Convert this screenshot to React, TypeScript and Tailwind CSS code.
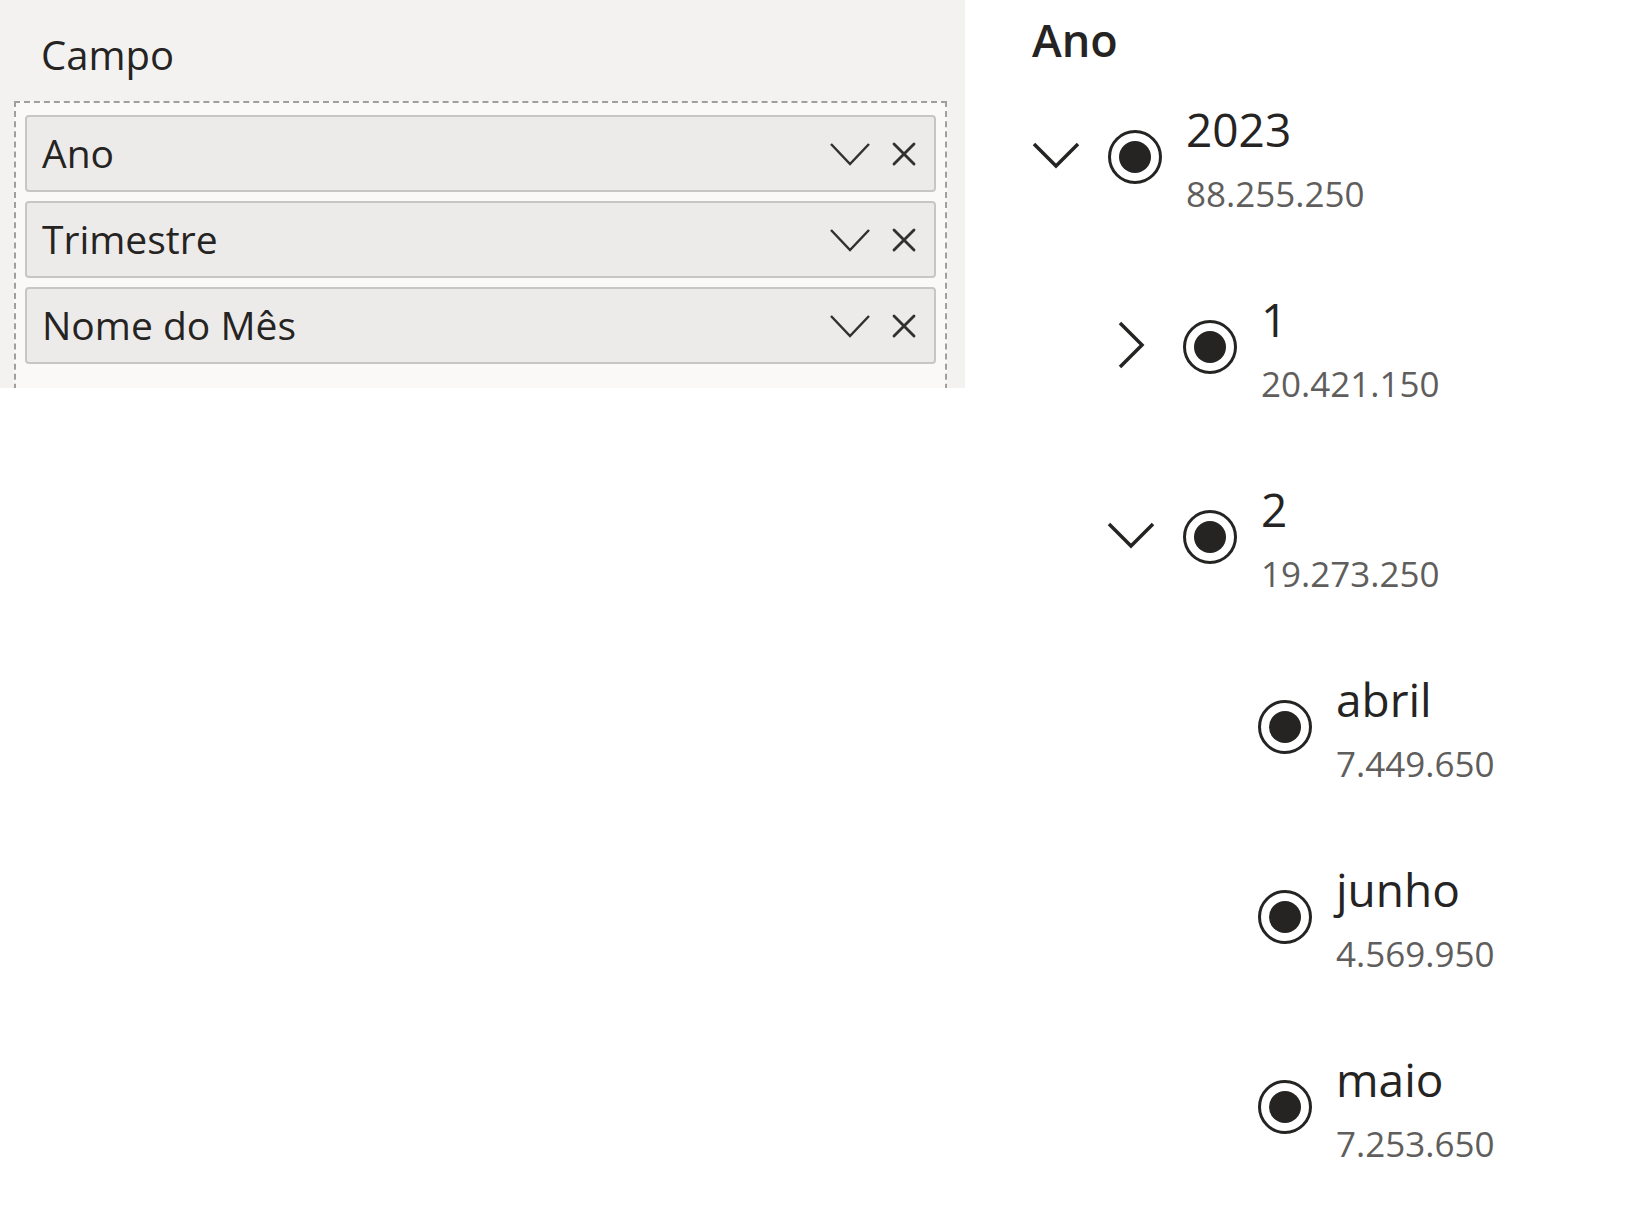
import { X } from 'lucide-react';

type Node = {
  label: string;
  value: string;
  level: number;
  chevron?: 'down' | 'right';
};

const fields = ['Ano', 'Trimestre', 'Nome do Mês'];

const tree: Node[] = [
  { label: '2023', value: '88.255.250', level: 0, chevron: 'down' },
  { label: '1', value: '20.421.150', level: 1, chevron: 'right' },
  { label: '2', value: '19.273.250', level: 1, chevron: 'down' },
  { label: 'abril', value: '7.449.650', level: 2 },
  { label: 'junho', value: '4.569.950', level: 2 },
  { label: 'maio', value: '7.253.650', level: 2 },
];

function ChevronDown({ className }: { className?: string }) {
  return (
    <svg viewBox="0 0 48 28" className={className} fill="none" stroke="currentColor" strokeWidth={3.5}>
      <polyline points="2,3 24,25 46,3" />
    </svg>
  );
}

function ChevronRight({ className }: { className?: string }) {
  return (
    <svg viewBox="0 0 28 48" className={className} fill="none" stroke="currentColor" strokeWidth={3.5}>
      <polyline points="3,2 25,24 3,46" />
    </svg>
  );
}

function FieldCard({ name }: { name: string }) {
  return (
    <div className="flex h-[77px] items-center rounded-[4px] border-2 border-[#c8c6c4] bg-[#edebe9] pl-[15px] pr-[10px]">
      <span className="flex-1 text-[39px] text-[#252423]">{name}</span>
      {/* dropdown + remove */}
      <div className="flex items-center gap-[14px] text-[#323130]">
        <svg viewBox="0 0 40 24" className="h-[24px] w-[40px]" fill="none" stroke="currentColor" strokeWidth={2.5}>
          <polyline points="1,2 20,22 39,2" />
        </svg>
        <X size={40} strokeWidth={1.7} />
      </div>
    </div>
  );
}

function Radio() {
  return (
    <div className="flex h-[54px] w-[54px] shrink-0 items-center justify-center rounded-full border-[3px] border-[#252423] bg-white">
      <div className="h-[32px] w-[32px] rounded-full bg-[#252423]" />
    </div>
  );
}

function TreeRow({ node }: { node: Node }) {
  return (
    <div className="flex items-start" style={{ paddingLeft: node.level * 75 }}>
      <div className="mt-[34px] flex h-[48px] w-[76px] shrink-0 items-center">
        <div className="flex w-[48px] justify-center text-[#252423]">
          {node.chevron === 'down' && <ChevronDown className="h-[28px] w-[48px]" />}
          {node.chevron === 'right' && <ChevronRight className="h-[48px] w-[28px]" />}
        </div>
      </div>
      <div className="mt-[33px]">
        <Radio />
      </div>
      <div className="ml-[24px] flex flex-col">
        <span className="text-[46px] leading-[64px] text-[#252423]">{node.label}</span>
        <span className="text-[35px] leading-[66px] text-[#605e5c]">{node.value}</span>
      </div>
    </div>
  );
}

export default function App() {
  return (
    <div
      className="flex h-[1227px] w-[1643px] items-start bg-white"
      style={{ fontFamily: '"Segoe UI", "Open Sans", sans-serif' }}
    >
      {/* Field well panel */}
      <div className="h-[388px] w-[965px] shrink-0 overflow-hidden bg-[#f3f2f1]">
        <div className="pl-[41px] pt-[31px] text-[40px] leading-[48px] text-[#252423]">Campo</div>
        <div className="ml-[14px] mt-[22px] h-[400px] w-[933px] border-2 border-dashed border-[#a19f9d] bg-[#faf9f8] px-[9px] pt-[12px]">
          <div className="flex flex-col gap-[9px]">
            {fields.map((f) => (
              <FieldCard key={f} name={f} />
            ))}
          </div>
        </div>
      </div>

      {/* Hierarchy slicer */}
      <div className="flex flex-col pl-[67px] pt-[10px]">
        <div className="text-[45px] font-semibold leading-[60px] text-[#252423]">Ano</div>
        <div className="mt-[27px] flex flex-col gap-[60px]">
          {tree.map((n) => (
            <TreeRow key={n.label} node={n} />
          ))}
        </div>
      </div>
    </div>
  );
}
